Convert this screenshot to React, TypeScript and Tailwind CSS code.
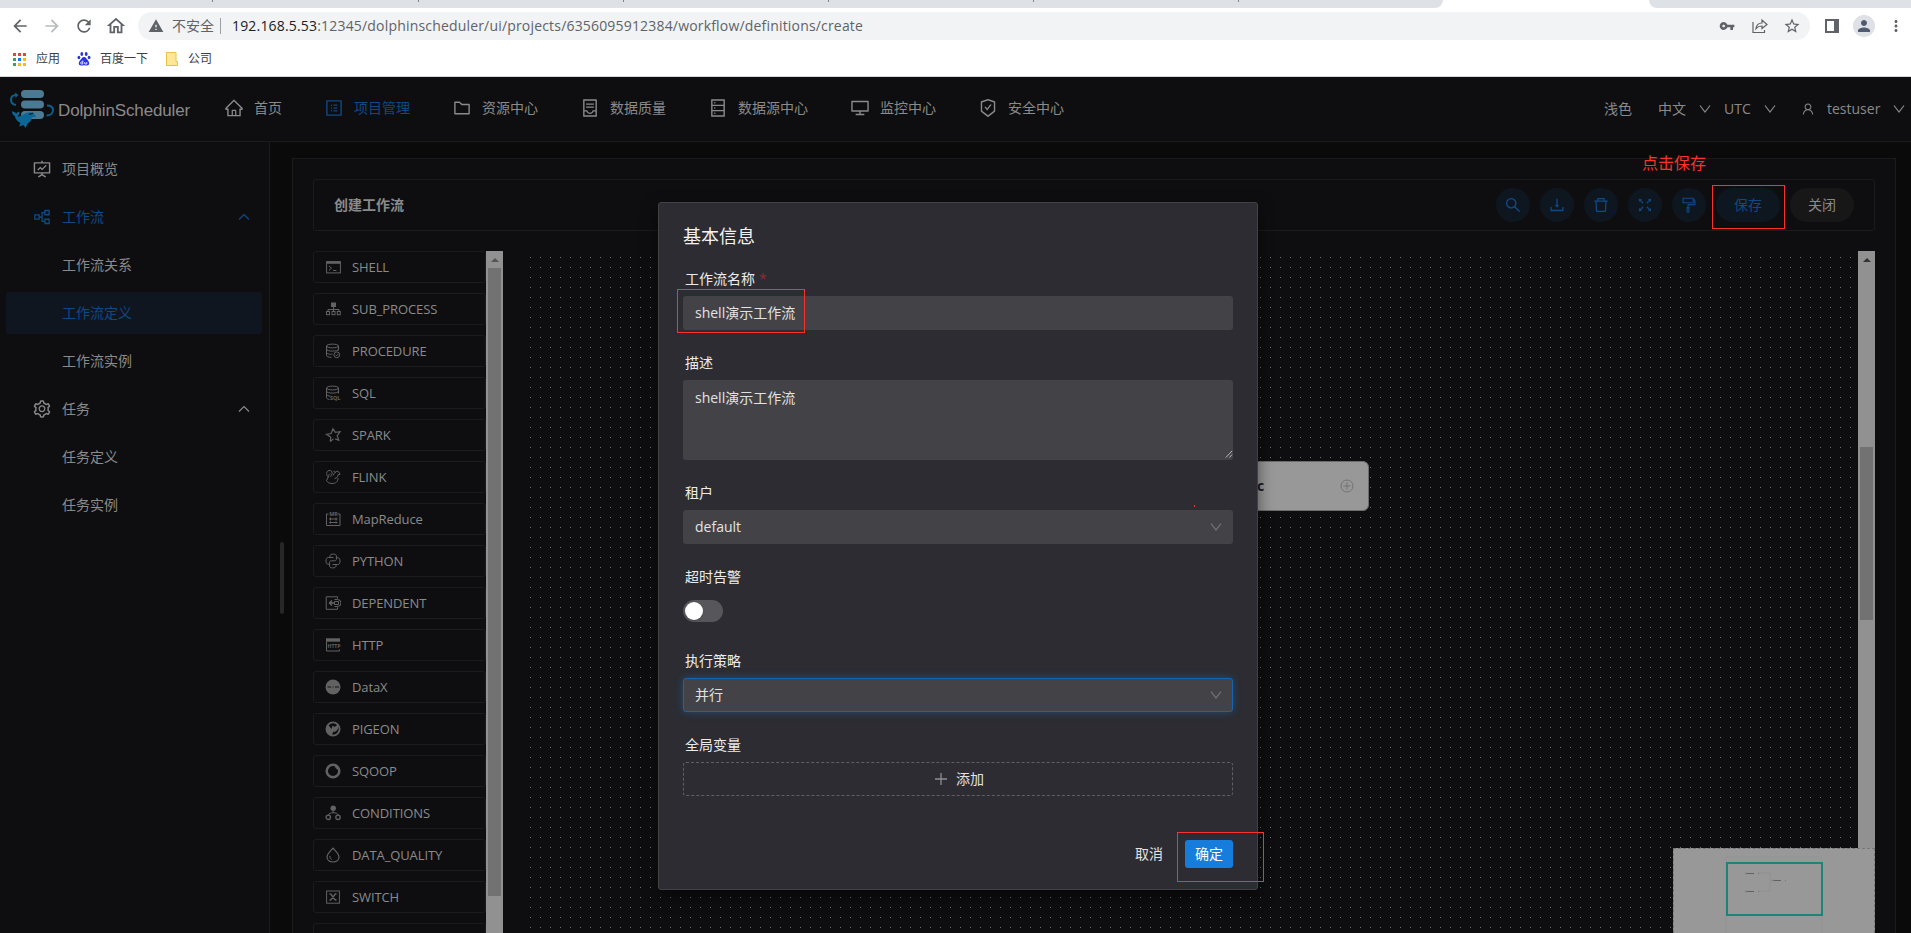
import type { ReactNode } from 'react'
import {
  AiOutlineContainer,
  AiOutlineDatabase,
  AiOutlineDelete,
  AiOutlineDesktop,
  AiOutlineDownload,
  AiOutlineFolder,
  AiOutlineFormatPainter,
  AiOutlineFullscreen,
  AiOutlineFundProjectionScreen,
  AiOutlineHome,
  AiOutlinePartition,
  AiOutlineProfile,
  AiOutlineSafetyCertificate,
  AiOutlineSearch,
  AiOutlineSetting,
  AiOutlineUser,
} from 'react-icons/ai'
import {
  MdArrowBack,
  MdArrowForward,
  MdMoreVert,
  MdOutlineHome,
  MdPerson,
  MdRefresh,
  MdStarBorder,
  MdVpnKey,
  MdWarning,
} from 'react-icons/md'


const NAV = [
  { label: '首页', icon: AiOutlineHome },
  { label: '项目管理', icon: AiOutlineProfile, active: true },
  { label: '资源中心', icon: AiOutlineFolder },
  { label: '数据质量', icon: AiOutlineContainer },
  { label: '数据源中心', icon: AiOutlineDatabase },
  { label: '监控中心', icon: AiOutlineDesktop },
  { label: '安全中心', icon: AiOutlineSafetyCertificate },
]

const MENU = [
  { label: '项目概览', icon: AiOutlineFundProjectionScreen },
  { label: '工作流', icon: AiOutlinePartition, open: true, blue: true },
  { label: '工作流关系' },
  { label: '工作流定义', blue: true, selected: true },
  { label: '工作流实例' },
  { label: '任务', icon: AiOutlineSetting, open: true },
  { label: '任务定义' },
  { label: '任务实例' },
]

const TOOLS = [
  AiOutlineSearch,
  AiOutlineDownload,
  AiOutlineDelete,
  AiOutlineFullscreen,
  AiOutlineFormatPainter,
]

// 16x16 line drawings, coloured by currentColor
const TASKS: { label: string; art: ReactNode }[] = [
  {
    label: 'SHELL',
    art: (
      <>
        <rect x="1.6" y="2.6" width="13.8" height="11.3" />
        <path d="M1.5 3.7h14" strokeWidth="2.2" />
        <path d="M4 7l2.6 2.2L4 11.4M8 11.5h3.4" />
      </>
    ),
  },
  {
    label: 'SUB_PROCESS',
    art: (
      <>
        <rect x="6.5" y="2" width="4" height="3.5" fill="currentColor" />
        <path d="M8.5 5.5v5M3 10.5v-2h11v2" />
        <rect x="1.5" y="10.5" width="3" height="3.2" />
        <rect x="7" y="10.5" width="3" height="3.2" />
        <rect x="12.3" y="10.5" width="3" height="3.2" />
      </>
    ),
  },
  {
    label: 'PROCEDURE',
    art: (
      <>
        <ellipse cx="7.5" cy="3" rx="6" ry="1.9" />
        <path d="M1.5 3v9.5c0 1 2 1.8 5 1.9M13.5 3v4.5M1.5 6.2c0 2.5 12 2.5 12 0M1.5 9.4c0 1.5 3 2 6 1.9" />
        <circle cx="11.8" cy="11.8" r="2.9" />
        <path d="M10.5 11.8l1 1 2-2" />
      </>
    ),
  },
  {
    label: 'SQL',
    art: (
      <>
        <ellipse cx="7.5" cy="3" rx="6" ry="1.9" />
        <path d="M1.5 3v9.5c0 1 1 1.6 3 1.9M13.5 3v5.5M1.5 6.2c0 2.5 12 2.5 12 0M1.5 9.4c0 1 2 1.6 4 1.7" />
        <text x="5" y="14.8" fontSize="5.5" fontWeight="700" fill="currentColor" stroke="none">SQL</text>
      </>
    ),
  },
  {
    label: 'SPARK',
    art: <path d="M5.2 14.5l.6-4.3L1.5 7.3l4.6-.8L8 1.7l2.3 3.6 4.9-.7-3 4 1.6 4.6-3.6-1.3M5.2 14.5l3.3-2.6" strokeWidth="1.2" />,
  },
  {
    label: 'FLINK',
    art: (
      <>
        <path d="M3.5 8.5C1 6.5 1 2 4 1.5c2-.4 3.5 1 3 3.2-.3 1.3-1.5 2-1.2 3.3M5 4.5c-1.3.6-1 3-3.5 7 1 2 3 3 5.5 3 4 0 6-2 6-5.5" />
        <path d="M8 6.5c1.5-3 3.5-4.5 5-4.3l2.2 3-2.2.6c0 2-1 3.3-3.5 3.7M8.5 2.5c1.5-.7 2 .3 1.5 1.5" />
      </>
    ),
  },
  {
    label: 'MapReduce',
    art: (
      <>
        <path d="M3.5 3h-2v11.5h13.5V3h-2M4 8h8.5M4 11.5h8.5M5.5 6.5v3M11 6.5v3M5.5 10.5v2M11 10.5v2" />
        <text x="4.2" y="5" fontSize="5.5" fontWeight="700" fill="currentColor" stroke="none">MR</text>
      </>
    ),
  },
  {
    label: 'PYTHON',
    art: (
      <>
        <path d="M8.5 4.5H3.2C1.5 4.5 1 6 1 8s.6 3.2 2 3.2h1.5V9.5c0-1 .7-1.7 1.8-1.7h3.4c1 0 1.7-.7 1.7-1.7V3c0-1.2-1-1.9-3.2-1.9S5 1.8 5 3v1.5" />
        <path d="M7.5 11.5h5.3c1.7 0 2.2-1.5 2.2-3.5s-.6-3.2-2-3.2h-1.5M4.6 10v3c0 1.2 1 1.9 3.2 1.9S11 14.2 11 13v-1.5" />
      </>
    ),
  },
  {
    label: 'DEPENDENT',
    art: (
      <>
        <path d="M12.5 3.5V1.8H1.2v12.5h11.3v-2" />
        <path d="M4 8h5M7 5.5L4.5 8 7 10.5" strokeWidth="1.5" />
        <path d="M9.5 4.5h3a3.4 3.4 0 010 7h-3M9.5 6.5h4v3h-4z" />
      </>
    ),
  },
  {
    label: 'HTTP',
    art: (
      <>
        <path d="M1 3h14" strokeWidth="3.4" />
        <path d="M1.5 3v11h13v-1.5" />
        <text x="2.6" y="11" fontSize="5.2" fontWeight="700" fill="currentColor" stroke="none">HTTP</text>
      </>
    ),
  },
  {
    label: 'DataX',
    art: (
      <>
        <circle cx="8" cy="8" r="7.5" fill="currentColor" stroke="none" />
        <path d="M2.5 8h3.5M7.5 8h1M10 8h4" stroke="#3a3a3b" strokeWidth="1.8" />
      </>
    ),
  },
  {
    label: 'PIGEON',
    art: (
      <>
        <circle cx="8" cy="8" r="6.6" strokeWidth="1.8" />
        <path d="M3 3.5l3.5 4.5 1-3.5 2 1.5L13 3.5c1 4-1 7.5-5 7.5l-1 3.5c-5-.5-7-6-4-11z" fill="currentColor" stroke="none" />
      </>
    ),
  },
  {
    label: 'SQOOP',
    art: (
      <>
        <circle cx="8" cy="8" r="6.3" strokeWidth="2.5" />
        <path d="M10.5 3l2.5 3" strokeWidth="2" />
      </>
    ),
  },
  {
    label: 'CONDITIONS',
    art: (
      <>
        <circle cx="8.2" cy="3.2" r="2.7" fill="currentColor" stroke="none" />
        <path d="M8.2 5v3M3.5 10c0-3 9.5-3 9.5 0" />
        <circle cx="3.3" cy="12.3" r="2.2" strokeWidth="1.3" />
        <circle cx="13" cy="12.3" r="2.2" strokeWidth="1.3" />
      </>
    ),
  },
  {
    label: 'DATA_QUALITY',
    art: (
      <>
        <path d="M8 1.2C5 4.5 2 7.2 2 10c0 3.2 2.8 5 6 5s6-1.8 6-5c0-2.8-3-5.5-6-8.8z" strokeWidth="1.2" />
        <path d="M5 9c-.3 2 .5 3 1.8 3.5" />
      </>
    ),
  },
  {
    label: 'SWITCH',
    art: (
      <>
        <rect x="1.6" y="2" width="12.8" height="12.2" />
        <path d="M4.5 5h1.2l4.6 6h1.2M4.5 11h1.2l4.6-6h1.2" strokeWidth="1.3" />
      </>
    ),
  },
  { label: '', art: <path d="M4 6l3 1 4-5-1 5 3 2-6 5z" /> },
]

const TAB_SEPARATORS = [212, 418, 623, 828, 1033, 1238]

const APP_DOTS = [
  '#ea4335', '#ea4335', '#ea4335',
  '#34a853', '#1a73e8', '#fbbc04',
  '#34a853', '#fbbc04', '#fbbc04',
]


function Chevron({ up, className }: { up?: boolean; className?: string }) {
  return (
    <svg viewBox="0 0 12 12" className={`h-3 w-3 shrink-0 ${className ?? ''}`} fill="none" stroke="currentColor" strokeWidth="1.2">
      <path d={up ? 'M1 8.5l5-5 5 5' : 'M1 2.5l5 6.5 5-6.5'} />
    </svg>
  )
}

function BrowserBar() {
  return (
    <div className="h-[77px] shrink-0 border-b border-[#d5d7da] bg-white text-[#5f6368]">
      <div className="relative flex h-2 justify-between">
        <div className="w-[1443px] rounded-br-lg bg-[#dee1e6]" />
        <div className="w-[262px] rounded-bl-lg bg-[#dee1e6]" />
        {TAB_SEPARATORS.map((x) => (
          <i key={x} className="absolute top-0 h-0.5 w-px bg-[#808387]" style={{ left: x }} />
        ))}
      </div>
      <div className="mt-1 flex h-7 items-center">
        <MdArrowBack className="ml-2.5 size-5" />
        <MdArrowForward className="ml-3 size-5 text-[#b8babd]" />
        <MdRefresh className="ml-3 size-5" />
        <MdOutlineHome className="ml-[11px] size-[22px]" />
        <div className="ml-[11px] flex h-7 w-[1672px] items-center rounded-full bg-[#f1f3f4]">
          <MdWarning className="ml-2.5 size-4" />
          <span className="ml-2 text-sm">不安全</span>
          <i className="ml-1.5 h-4 w-px bg-[#9aa0a6]" />
          <span className="ml-[11px] whitespace-nowrap text-sm tracking-[0.18px]">
            <span className="text-[#202124]">192.168.5.53</span>
            :12345/dolphinscheduler/ui/projects/6356095912384/workflow/definitions/create
          </span>
          <MdVpnKey className="ml-auto size-4" />
          <svg viewBox="0 0 16 16" className="ml-[17px] size-4" fill="none" stroke="currentColor" strokeWidth="1.2">
            <path d="M1 4v10.5h11.5v-2.5M4 10.5C4.5 7 7 5 10 5V2l5 4.5-5 4V8C7.5 8 5.5 8.7 4 10.5z" />
          </svg>
          <MdStarBorder className="ml-[15px] mr-[9px] size-[18px]" />
        </div>
        <svg viewBox="0 0 14 14" className="ml-[15px] size-3.5">
          <path d="M0 0h14v14H0zM2 2v10h7V2z" fill="currentColor" fillRule="evenodd" />
        </svg>
        <div className="ml-3.5 flex size-[22px] items-center justify-center rounded-full bg-[#dee1e6]">
          <MdPerson className="size-[18px] text-[#4f5b70]" />
        </div>
        <MdMoreVert className="ml-3 size-[18px]" />
      </div>
      <div className="mt-2.5 flex h-[18px] items-center pl-[13px] text-xs text-[#3c4043]">
        <div className="grid grid-cols-3 gap-0.5">
          {APP_DOTS.map((color, i) => (
            <i key={i} className="size-[3px]" style={{ background: color }} />
          ))}
        </div>
        <span className="ml-2.5">应用</span>
        <svg viewBox="0 0 14 14" className="ml-[17px] size-3.5 text-[#2932e1]" fill="currentColor">
          <ellipse cx="4.8" cy="2" rx="1.4" ry="1.9" />
          <ellipse cx="9.2" cy="2" rx="1.4" ry="1.9" />
          <ellipse cx="1.9" cy="5.5" rx="1.4" ry="1.8" />
          <ellipse cx="12.1" cy="5.5" rx="1.4" ry="1.8" />
          <path d="M7 5c2 0 2.5 2 4 3.5s2 5-1 5c-1.5 0-2-.3-3-.3s-1.5.3-3 .3c-3 0-2.5-3.5-1-5S5 5 7 5z" />
          <path d="M5.8 8.5v3.5H4.5c-1.2 0-1.2-2 0-2h1.3M7.8 10v2h2v-2" fill="none" stroke="#fff" strokeWidth=".8" />
        </svg>
        <span className="ml-[9px]">百度一下</span>
        <svg viewBox="0 0 12 14" className="ml-[18px] h-3.5 w-3">
          <path d="M.5.5h9.5v9h1.5v4H.5z" fill="#ffe79a" stroke="#e8c440" />
        </svg>
        <span className="ml-2.5">公司</span>
      </div>
    </div>
  )
}

// stacked discs with a dolphin in front
function Logo() {
  return (
    <svg viewBox="0 0 46 38" className="h-[38px] w-[46px]">
      <rect x="12" y="0" width="23" height="8" rx="4" fill="#4c7a93" />
      <rect x="12" y="10.5" width="23" height="8" rx="4" fill="#4c7a93" />
      <rect x="12" y="21" width="23" height="8" rx="4" fill="#4c7a93" />
      <path d="M8 5C3 4.5 2 7.5 2 10s1.5 4.5 5 5M38 15.5c4 0 6 2 6 4.5s-2 5.5-6.5 5.5" fill="none" stroke="#0b5f8a" strokeWidth="2" />
      <path d="M6 2.5l3.5 2.5L6.5 8z" fill="#0b5f8a" />
      <path d="M3 21c2 1 3.500 1.200 4.200 2.700.8-1.500 1.800-2 3.300-2-.2 2.500-1 3.700-2 4.500 3.500 1 5.500-2.200 9-3.200 5-1.500 9 .5 9.300 4.500-1.800-.8-3.300-.5-4.200.5-.3 2.500-1.300 4-4 5.500L16.500 38l-2-3-4.500 1.500 1.500-3.500C8.500 31.500 6.500 29.500 6 26.500 4 25 3 23.500 3 21z" fill="#0b6796" />
      <path d="M20 24.5l4-1.5" stroke="#0e0e10" strokeWidth="1.2" />
    </svg>
  )
}

function Header() {
  return (
    <header className="flex h-[65px] shrink-0 items-center border-b border-[#1b1b1d] pl-[9px] pr-1.5">
      <Logo />
      <span className="ml-[3px] mt-1 w-[166px] font-['Liberation_Sans',sans-serif] text-[17px] tracking-[-0.13px]">DolphinScheduler</span>
      <nav className="-mt-0.5 flex gap-[42px]">
        {NAV.map(({ label, icon: Icon, active }) => (
          <a key={label} className={`flex items-center gap-2.5 ${active ? 'text-[#104985]' : ''}`}>
            <Icon className="size-5" />
            {label}
          </a>
        ))}
      </nav>
      <div className="ml-auto flex items-center">
        <span>浅色</span>
        <span className="ml-[26px]">中文</span>
        <Chevron className="ml-[13px]" />
        <span className="ml-[13px] w-7">UTC</span>
        <Chevron className="ml-3" />
        <AiOutlineUser className="ml-[25px] size-3.5" />
        <span className="ml-3 w-[54px]">testuser</span>
        <Chevron className="ml-3" />
      </div>
    </header>
  )
}

function Sidebar() {
  return (
    <aside className="flex w-[270px] shrink-0 flex-col gap-1.5 border-r border-[#1b1b1d] px-1.5 pt-1.5">
      {MENU.map(({ label, icon: Icon, open, blue, selected }) => (
        <div
          key={label}
          className={`flex h-[42px] w-64 items-center rounded-[3px] pl-[26px] pr-3 ${blue ? 'text-[#104985]' : ''} ${selected ? 'bg-[#0f161f]' : ''}`}>
          <span className="w-[30px]">{Icon && <Icon className="size-5" />}</span>
          {label}
          {open && <Chevron up className="ml-auto" />}
        </div>
      ))}
    </aside>
  )
}

function Toolbar() {
  return (
    <div className="flex h-[52px] shrink-0 items-center gap-2.5 rounded-[3px] border border-[#1b1b1d] px-5">
      <span className="mr-auto font-bold">创建工作流</span>
      {TOOLS.map((Icon, i) => (
        <button key={i} className="flex size-[34px] items-center justify-center rounded-full bg-[#0e1720] text-[#104985]">
          <Icon className="size-[18px]" />
        </button>
      ))}
      <button className="h-[34px] w-16 rounded-full bg-[#0e1720] text-[#104985]">保存</button>
      <button className="h-[34px] w-16 rounded-full bg-[#171718]">关闭</button>
    </div>
  )
}

function TaskList() {
  return (
    <div className="flex w-[190px] shrink-0">
      <div className="flex h-full w-[173px] flex-col gap-2.5 overflow-hidden">
        {TASKS.map(({ label, art }) => (
          <div key={label} className="flex h-8 shrink-0 items-center rounded-[3px] border border-[#1b1b1d] pl-[11px] text-[13px] tracking-[-0.1px]">
            <svg viewBox="0 0 16 16" className="mr-[11px] size-4 text-[#626263]" fill="none" stroke="currentColor">
              {art}
            </svg>
            {label}
          </div>
        ))}
      </div>
      <div className="flex w-[17px] flex-col items-center bg-[#919191]">
        <i className="mt-[7px] border-x-4 border-b-4 border-x-transparent border-b-[#555]" />
        <i className="mt-1.5 h-[628px] w-[13px] bg-[#727272]" />
      </div>
    </div>
  )
}

function Minimap() {
  return (
    <div className="absolute bottom-0 right-0 h-[85px] w-[202px] border-x border-t border-dashed border-[#777] bg-[#989898]">
      <svg viewBox="0 0 200 84" className="h-[84px] w-[200px]" fill="none">
        <path d="M52 84V8h96v76" stroke="#929292" />
        <rect x="53" y="14" width="95" height="52" stroke="#1f8379" strokeWidth="2" />
        <path d="M85 24h11v18h-11M96 31.5h3" stroke="#8f8f8f" strokeWidth=".6" />
        <path d="M73 24.5h7M73 42.5h7M100 31.5h7" stroke="#606060" strokeWidth="1.2" />
        <path d="M71 24.5h2M71 42.5h2M98 31.5h2M84 24.5h1M84 42.5h1M111 31.5h1" stroke="#7c7c7c" strokeWidth="1.6" />
      </svg>
    </div>
  )
}

function Canvas() {
  return (
    <div className="relative ml-5 flex min-w-0 flex-1">
      <div className="relative flex-1 overflow-hidden bg-[radial-gradient(circle_at_0.5px_0.5px,#707071_0.7px,transparent_0.7px)] bg-[size:10px_10px] bg-[position:7px_6px]">
        {/* node, partly under the dialog */}
        <div className="absolute left-[626px] top-[210px] flex h-[50px] w-[220px] items-center rounded-md border border-[#6c6c6d] bg-[#989898] pr-3.5">
          <span className="ml-[107px] text-sm font-bold text-[#1a1a2a]">c</span>
          <svg viewBox="0 0 14 14" className="ml-auto size-3.5 text-[#737373]" fill="none" stroke="currentColor">
            <circle cx="7" cy="7" r="6" />
            <path d="M7 3.5v7M3.5 7h7" />
          </svg>
        </div>
      </div>
      <div className="flex w-[17px] flex-col items-center bg-[#919191]">
        <i className="mt-[7px] border-x-4 border-b-4 border-x-transparent border-b-[#333]" />
        <i className="mt-[185px] h-[173px] w-[13px] bg-[#727272]" />
      </div>
      <Minimap />
    </div>
  )
}

function Field({ label, required, className, children }: { label: string; required?: boolean; className: string; children: ReactNode }) {
  return (
    <div className={className}>
      <div className="flex h-[26px] items-center pb-2 pl-0.5 text-[#ececed]">
        {label}
        {required && <span className="ml-1 text-[#8c2c34]">*</span>}
      </div>
      {children}
    </div>
  )
}

function Dialog() {
  return (
    <div className="absolute left-[658px] top-[202px] flex h-[688px] w-[600px] flex-col rounded-[3px] border border-[#414146] bg-[#2c2c32] px-6 text-[#e2e2e3] shadow-[0_6px_16px_rgba(0,0,0,0.5)]">
      <h2 className="mt-[19px] text-lg leading-7 text-[#f2f2f2]">基本信息</h2>
      <Field label="工作流名称" required className="mt-5">
        <div className="flex h-[34px] items-center rounded-[3px] bg-[#434347] px-3">shell演示工作流</div>
      </Field>
      <Field label="描述" className="mt-6">
        <div className="relative h-20 rounded-[3px] bg-[#434347] px-3 py-2">
          shell演示工作流
          <svg viewBox="0 0 9 9" className="absolute bottom-0.5 right-0 size-2" stroke="#c9c9c9">
            <path d="M1 8.5L8 1M5 8.5l3-3.5" />
          </svg>
        </div>
      </Field>
      <Field label="租户" className="mt-6">
        <div className="flex h-[34px] items-center justify-between rounded-[3px] bg-[#434347] px-3">
          default
          <Chevron className="-mr-px text-[#77777a]" />
        </div>
      </Field>
      <Field label="超时告警" className="mt-6">
        <div className="flex h-[34px] items-center">
          <div className="h-[22px] w-10 rounded-full bg-[#57575b] p-0.5">
            <div className="size-[18px] rounded-full bg-white shadow" />
          </div>
        </div>
      </Field>
      <Field label="执行策略" className="mt-6">
        <div className="flex h-[34px] items-center justify-between rounded-[3px] border border-[#1864ae] bg-[#434347] px-[11px] shadow-[0_0_8px_rgba(24,125,220,0.4)]">
          并行
          <Chevron className="-mr-px text-[#77777a]" />
        </div>
      </Field>
      <Field label="全局变量" className="mt-6">
        <div className="flex h-[34px] items-center justify-center gap-2 rounded-[3px] border border-dashed border-[#606064] pl-0.5">
          <svg viewBox="0 0 14 14" className="size-3.5" stroke="#8f8f92" strokeWidth="1.3">
            <path d="M7 1v12M1 7h12" />
          </svg>
          添加
        </div>
      </Field>
      <div className="mt-11 flex h-7 items-center justify-end gap-[22px]">
        <button>取消</button>
        <button className="h-7 w-12 rounded-[3px] bg-[#177ddc] text-white">确定</button>
      </div>
    </div>
  )
}

// red marks drawn over the screen to guide the reader
function Annotations() {
  return (
    <>
      <span className="absolute left-[1642px] top-[151px] text-base leading-6 text-[#f9322e]">点击保存</span>
      <div className="absolute left-[1712px] top-[185px] h-11 w-[73px] border border-[#f9322e]" />
      <div className="absolute left-[677px] top-[289px] h-11 w-32 border border-[#f9322e]" />
      <div className="absolute left-[1177px] top-[832px] h-[50px] w-[87px] border border-[#f9322e]" />
      <div className="absolute left-[1194px] top-[505px] h-0.5 w-px bg-[#f9322e]" />
    </>
  )
}

export default function App() {
  return (
    <div className="relative flex h-[933px] w-[1911px] flex-col overflow-hidden bg-[#0e0e10] font-['Open_Sans','Noto_Sans_CJK_SC',sans-serif] text-sm text-[#8a8a8b]">
      <BrowserBar />
      <Header />
      <div className="flex min-h-0 flex-1">
        <Sidebar />
        <main className="flex min-w-0 flex-1 bg-[#0a0a0a] pr-[15px] pt-4">
          <i className="ml-2.5 mr-2 mt-96 h-[72px] w-1 rounded-full bg-[#272727]" />
          <section className="flex min-w-0 flex-1 flex-col border border-b-0 border-[#1b1b1d] bg-[#0e0e10] px-5 pt-5">
            <Toolbar />
            <div className="mt-5 flex min-h-0 flex-1">
              <TaskList />
              <Canvas />
            </div>
          </section>
        </main>
      </div>
      <Dialog />
      <Annotations />
    </div>
  )
}
